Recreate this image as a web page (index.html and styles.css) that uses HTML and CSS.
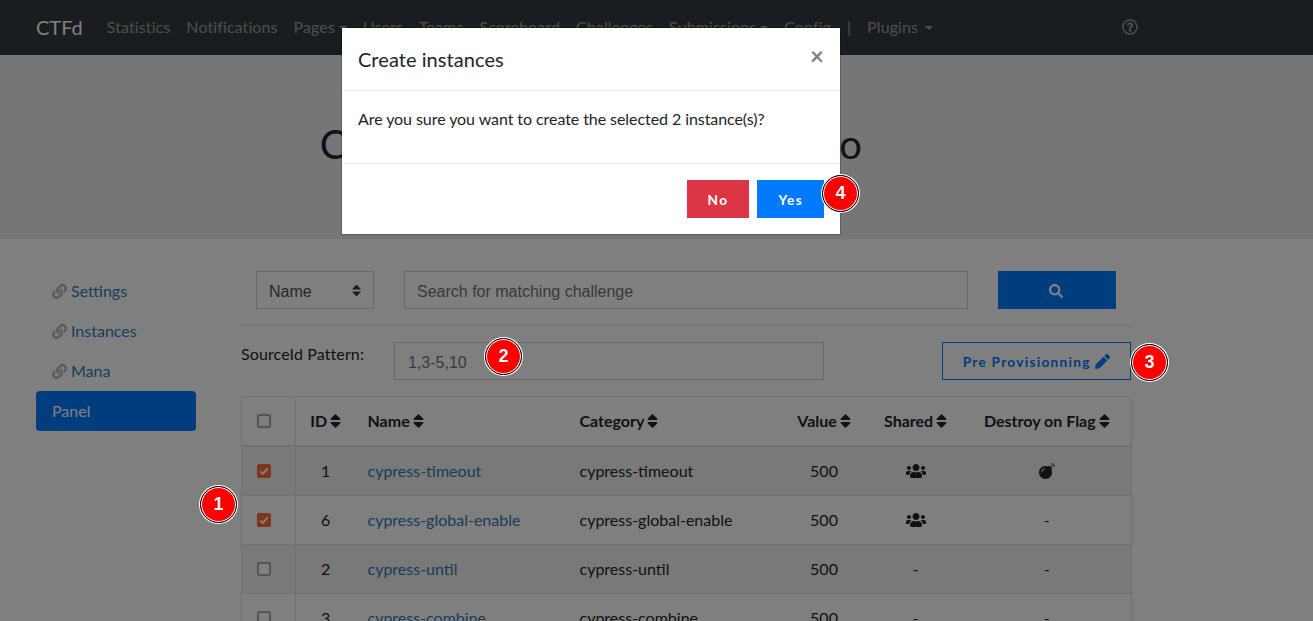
FILE: index.html
```html
<!DOCTYPE html>
<html lang="en">
<head>
    <meta charset="UTF-8">
    <meta name="viewport" content="width=device-width, initial-scale=1.0">
    <title>CTFd - Instances panel</title>
    <link rel="stylesheet" href="styles.css">
</head>

<body>
    <!-- Icon sprites, reused below with <use> -->
    <svg class="sprites" aria-hidden="true">
        <symbol id="i-sort" viewBox="0 0 320 512"><path d="M41 288h238c21.4 0 32.1 25.9 17 41L177 448c-9.4 9.4-24.6 9.4-33.9 0L24 329c-15.1-15.1-4.4-41 17-41zm255-105L177 64c-9.4-9.4-24.6-9.4-33.9 0L24 183c-15.1 15.1-4.4 41 17 41h238c21.4 0 32.1-25.9 17-41z"/></symbol>
        <symbol id="i-link" viewBox="0 0 512 512"><path d="M326.612 185.391c59.747 59.809 58.927 155.698.36 214.59-.11.12-.24.25-.36.37l-67.2 67.2c-59.27 59.27-155.699 59.262-214.96 0-59.27-59.26-59.27-155.7 0-214.96l37.106-37.106c9.84-9.84 26.786-3.3 27.294 10.606.648 17.722 3.826 35.527 9.69 52.721 1.986 5.822.567 12.262-3.783 16.612l-13.087 13.087c-28.026 28.026-28.905 73.66-1.155 101.96 28.024 28.579 74.086 28.749 102.325.51l67.2-67.19c28.191-28.191 28.073-73.757 0-101.83-3.701-3.694-7.429-6.564-10.341-8.569a16.037 16.037 0 0 1-6.947-12.606c-.396-10.567 3.348-21.456 11.698-29.806l21.054-21.055c5.521-5.521 14.182-6.199 20.584-1.731a152.482 152.482 0 0 1 20.522 17.197zM467.547 44.449c-59.261-59.262-155.69-59.27-214.96 0l-67.2 67.2c-.12.12-.25.25-.36.37-58.566 58.892-59.387 154.781.36 214.59a152.454 152.454 0 0 0 20.521 17.196c6.402 4.468 15.064 3.789 20.584-1.731l21.054-21.055c8.35-8.35 12.094-19.239 11.698-29.806a16.037 16.037 0 0 0-6.947-12.606c-2.912-2.005-6.64-4.875-10.341-8.569-28.073-28.073-28.191-73.639 0-101.83l67.2-67.19c28.239-28.239 74.3-28.069 102.325.51 27.75 28.3 26.872 73.934-1.155 101.96l-13.087 13.087c-4.35 4.35-5.769 10.79-3.783 16.612 5.864 17.194 9.042 34.999 9.69 52.721.509 13.906 17.454 20.446 27.294 10.606l37.106-37.106c59.271-59.259 59.271-155.699.001-214.959z"/></symbol>
        <symbol id="i-users" viewBox="0 0 640 512"><path d="M96 224c35.3 0 64-28.7 64-64s-28.7-64-64-64-64 28.7-64 64 28.7 64 64 64zm448 0c35.3 0 64-28.7 64-64s-28.7-64-64-64-64 28.7-64 64 28.7 64 64 64zm32 32h-64c-17.6 0-33.5 7.1-45.1 18.6 40.3 22.1 68.9 62 75.1 109.4h66c17.7 0 32-14.3 32-32v-32c0-35.3-28.7-64-64-64zm-256 0c61.9 0 112-50.1 112-112S381.9 32 320 32 208 82.1 208 144s50.1 112 112 112zm76.8 32h-8.3c-20.8 10-43.9 16-68.5 16s-47.6-6-68.5-16h-8.3C179.6 288 128 339.6 128 403.2V432c0 26.5 21.5 48 48 48h288c26.5 0 48-21.5 48-48v-28.8c0-63.6-51.6-115.2-115.2-115.2zm-223.7-13.4C161.5 263.1 145.6 256 128 256H64c-35.3 0-64 28.7-64 64v32c0 17.7 14.3 32 32 32h65.9c6.3-47.4 34.9-87.3 75.2-109.4z"/></symbol>
        <symbol id="i-bomb" viewBox="0 0 512 512"><path d="M440.5 88.5l-52 52L415 167c9.4 9.4 9.4 24.6 0 33.9l-17.4 17.4c11.8 26.1 18.4 55.1 18.4 85.6 0 114.9-93.1 208-208 208S0 418.9 0 304 93.1 96 208 96c30.5 0 59.5 6.6 85.6 18.4L311 97c9.4-9.4 24.6-9.4 33.9 0l26.5 26.5 52-52 17.1 17zM500 60h-24c-6.6 0-12 5.4-12 12s5.4 12 12 12h24c6.6 0 12-5.4 12-12s-5.4-12-12-12zM440 0c-6.6 0-12 5.4-12 12v24c0 6.6 5.4 12 12 12s12-5.4 12-12V12c0-6.6-5.4-12-12-12zm33.9 55l17-17c4.7-4.7 4.7-12.3 0-17-4.7-4.7-12.3-4.7-17 0l-17 17c-4.7 4.7-4.7 12.3 0 17 4.8 4.7 12.4 4.7 17 0zm-67.8 0c4.7 4.7 12.3 4.7 17 0 4.7-4.7 4.7-12.3 0-17l-17-17c-4.7-4.7-12.3-4.7-17 0-4.7 4.7-4.7 12.3 0 17l17 17zm67.8 34c-4.7-4.7-12.3-4.7-17 0-4.7 4.7-4.7 12.3 0 17l17 17c4.7 4.7 12.3 4.7 17 0 4.7-4.7 4.7-12.3 0-17l-17-17zM112 272c0-35.3 28.7-64 64-64 8.8 0 16-7.2 16-16s-7.2-16-16-16c-52.9 0-96 43.1-96 96 0 8.8 7.2 16 16 16s16-7.2 16-16z"/></symbol>
    </svg>

    <nav class="navbar">
        <div class="navbar-inner">
            <a class="brand" href="#">CTFd</a>
            <a class="nav-link" href="#">Statistics</a>
            <a class="nav-link" href="#">Notifications</a>
            <a class="nav-link caret" href="#">Pages</a>
            <a class="nav-link" href="#">Users</a>
            <a class="nav-link" href="#">Teams</a>
            <a class="nav-link" href="#">Scoreboard</a>
            <a class="nav-link" href="#">Challenges</a>
            <a class="nav-link caret" href="#">Submissions</a>
            <a class="nav-link" href="#">Config</a>
            <span class="nav-link">|</span>
            <a class="nav-link caret caret-wide" href="#">Plugins</a>
            <a class="nav-link nav-help" href="#" aria-label="Help">
                <svg class="icon-help" viewBox="0 0 512 512"><path d="M256 8C119.043 8 8 119.083 8 256c0 136.997 111.043 248 248 248s248-111.003 248-248C504 119.083 392.957 8 256 8zm0 448c-110.532 0-200-89.431-200-200 0-110.495 89.472-200 200-200 110.491 0 200 89.471 200 200 0 110.53-89.431 200-200 200zm107.244-255.2c0 67.052-72.421 68.084-72.421 92.863V300c0 6.627-5.373 12-12 12h-45.647c-6.627 0-12-5.373-12-12v-8.659c0-35.745 27.1-50.034 47.579-61.516 17.561-9.845 28.324-16.541 28.324-29.579 0-17.246-21.999-28.693-39.784-28.693-23.189 0-33.894 10.977-48.942 29.969-4.057 5.12-11.46 6.071-16.666 2.124l-27.824-21.098c-5.107-3.872-6.251-11.066-2.644-16.363C184.846 131.491 214.94 112 261.794 112c49.071 0 101.45 38.304 101.45 88.8zM298 368c0 23.159-18.841 42-42 42s-42-18.841-42-42 18.841-42 42-42 42 18.841 42 42z"/></svg>
            </a>
        </div>
    </nav>

    <header class="jumbotron">
        <h1>Chall-Manager's Instances Info</h1>
    </header>

    <div class="page">
        <aside class="sidebar">
            <a class="side-link" href="#"><svg class="icon-link"><use href="#i-link"/></svg>Settings</a>
            <a class="side-link" href="#"><svg class="icon-link"><use href="#i-link"/></svg>Instances</a>
            <a class="side-link" href="#"><svg class="icon-link"><use href="#i-link"/></svg>Mana</a>
            <a class="side-link active" href="#">Panel</a>
        </aside>

        <main class="content">
            <form class="search-row">
                <select class="field search-field">
                    <option>Name</option>
                </select>
                <input class="field search-input" type="text" placeholder="Search for matching challenge">
                <button class="search-btn" type="button" aria-label="Search">
                    <svg class="icon-search" viewBox="0 0 512 512"><path d="M505 442.7L405.3 343c-4.5-4.5-10.6-7-17-7H372c27.6-35.3 44-79.7 44-128C416 93.1 322.9 0 208 0S0 93.1 0 208s93.1 208 208 208c48.3 0 92.7-16.4 128-44v16.3c0 6.4 2.5 12.5 7 17l99.7 99.7c9.4 9.4 24.6 9.4 33.9 0l28.3-28.3c9.4-9.4 9.4-24.6.1-34zM208 336c-70.7 0-128-57.2-128-128 0-70.7 57.2-128 128-128 70.7 0 128 57.2 128 128 0 70.7-57.2 128-128 128z"/></svg>
                </button>
            </form>

            <hr class="divider">

            <div class="source-row">
                <label class="source-label" for="sourceId">SourceId Pattern:</label>
                <input class="field source-input" id="sourceId" type="text" placeholder="1,3-5,10">
                <button class="outline-btn" type="button">Pre Provisionning
                    <svg class="icon-pencil" viewBox="0 0 512 512"><path d="M497.9 142.1l-46.1 46.1c-4.7 4.7-12.3 4.7-17 0l-111-111c-4.7-4.7-4.7-12.3 0-17l46.1-46.1c18.7-18.7 49.1-18.7 67.9 0l60.1 60.1c18.8 18.7 18.8 49.1 0 67.9zM284.2 99.8L21.6 362.4.4 483.9c-2.9 16.4 11.4 30.6 27.8 27.8l121.5-21.3 262.6-262.6c4.7-4.7 4.7-12.3 0-17l-111-111c-4.8-4.7-12.4-4.7-17.1 0z"/></svg>
                </button>
            </div>

            <table class="challenges">
                <colgroup>
                    <col class="col-check">
                    <col class="col-id">
                    <col class="col-name">
                    <col class="col-category">
                    <col class="col-value">
                    <col class="col-shared">
                    <col class="col-destroy">
                </colgroup>
                <thead>
                    <tr>
                        <th class="cell-check"><span class="check"></span></th>
                        <th class="center">ID <svg class="icon-sort"><use href="#i-sort"/></svg></th>
                        <th>Name <svg class="icon-sort"><use href="#i-sort"/></svg></th>
                        <th>Category <svg class="icon-sort"><use href="#i-sort"/></svg></th>
                        <th class="center">Value <svg class="icon-sort"><use href="#i-sort"/></svg></th>
                        <th class="center">Shared <svg class="icon-sort"><use href="#i-sort"/></svg></th>
                        <th class="center">Destroy on Flag <svg class="icon-sort"><use href="#i-sort"/></svg></th>
                    </tr>
                </thead>
                <tbody>
                    <tr>
                        <td class="cell-check"><span class="check checked"><svg viewBox="0 0 14 14"><path d="M3.2 7.4l2.6 2.5 5-5.6"/></svg></span></td>
                        <td class="center">1</td>
                        <td><a href="#">cypress-timeout</a></td>
                        <td>cypress-timeout</td>
                        <td class="center">500</td>
                        <td class="center"><svg class="icon-users"><use href="#i-users"/></svg></td>
                        <td class="center"><svg class="icon-bomb"><use href="#i-bomb"/></svg></td>
                    </tr>
                    <tr>
                        <td class="cell-check"><span class="check checked"><svg viewBox="0 0 14 14"><path d="M3.2 7.4l2.6 2.5 5-5.6"/></svg></span></td>
                        <td class="center">6</td>
                        <td><a href="#">cypress-global-enable</a></td>
                        <td>cypress-global-enable</td>
                        <td class="center">500</td>
                        <td class="center"><svg class="icon-users"><use href="#i-users"/></svg></td>
                        <td class="center">-</td>
                    </tr>
                    <tr>
                        <td class="cell-check"><span class="check"></span></td>
                        <td class="center">2</td>
                        <td><a href="#">cypress-until</a></td>
                        <td>cypress-until</td>
                        <td class="center">500</td>
                        <td class="center">-</td>
                        <td class="center">-</td>
                    </tr>
                    <tr>
                        <td class="cell-check"><span class="check"></span></td>
                        <td class="center">3</td>
                        <td><a href="#">cypress-combine</a></td>
                        <td>cypress-combine</td>
                        <td class="center">500</td>
                        <td class="center">-</td>
                        <td class="center">-</td>
                    </tr>
                </tbody>
            </table>
        </main>
    </div>

    <div class="backdrop"></div>

    <div class="modal-wrap">
        <div class="modal" role="dialog">
            <div class="modal-header">
                <h5>Create instances</h5>
                <button class="close" type="button" aria-label="Close">&times;</button>
            </div>
            <div class="modal-body">
                <p>Are you sure you want to create the selected 2 instance(s)?</p>
            </div>
            <div class="modal-footer">
                <button class="modal-btn btn-no" type="button">No</button>
                <button class="modal-btn btn-yes" type="button">Yes</button>
            </div>
        </div>
    </div>

    <!-- Numbered callouts drawn over the screenshot -->
    <span class="marker marker-1">1</span>
    <span class="marker marker-2">2</span>
    <span class="marker marker-3">3</span>
    <span class="marker marker-4">4</span>
</body>
</html>
```

FILE: styles.css
```css
* {
    box-sizing: border-box;
}

html, body {
    height: 100%;
}

body {
    margin: 0;
    overflow: hidden; /* modal open, page does not scroll */
    font-family: "Lato", sans-serif;
    font-size: 16px;
    line-height: 24px;
    color: #212529;
    background-color: #fff;
}

a {
    color: #337ab7;
    text-decoration: none;
}

.sprites {
    display: none;
}

/* Navbar */
.navbar {
    height: 55px;
    background-color: #343a40;
}
.navbar-inner {
    width: 1182px;
    height: 55px;
    padding: 0 36px;
    display: flex;
    align-items: center;
}
.brand {
    margin: -2px 16px 0 0;
    font-size: 20px;
    line-height: 30px;
    color: #fff;
}
.nav-link {
    margin-top: -2px;
    padding: 8px;
    letter-spacing: .1px;
    color: rgba(255, 255, 255, .5);
}
.caret::after {
    content: "";
    display: inline-block;
    margin-left: 4px;
    vertical-align: 3px;
    border-top: 4.5px solid;
    border-right: 4px solid transparent;
    border-left: 4px solid transparent;
}
.caret-wide::after {
    margin-left: 7px;
}
.nav-help {
    margin-left: auto;
    display: flex;
}
.icon-help {
    width: 16px;
    height: 16px;
    fill: currentColor;
}

/* Jumbotron */
.jumbotron {
    width: 100%;
    height: 184px;
    padding-top: 65px;
    background-color: #e9ecef;
}
.jumbotron h1 {
    width: 1182px;
    margin: 0;
    font-size: 40px;
    font-weight: 400;
    line-height: 48px;
    letter-spacing: .2px;
    text-align: center;
}

/* Page layout */
.page {
    width: 1182px;
    padding: 32px 51px 0 36px;
    display: flex;
}
.sidebar {
    width: 160px;
    flex: none;
    display: flex;
    flex-direction: column;
}
.side-link {
    height: 40px;
    padding: 8px 16px;
    border-radius: 4px;
    display: flex;
    align-items: center;
}
.side-link.active {
    color: #fff;
    background-color: #007bff;
}
.icon-link {
    width: 15px;
    height: 15px;
    margin-right: 4px;
    fill: #adb5bd;
}
.content {
    flex: 1;
    margin-left: 45px;
    min-width: 0;
}

/* Form controls */
.field {
    height: 38px;
    padding: 8px 12px 4px;
    border: 1px solid #ced4da;
    border-radius: 0;
    font-family: "Liberation Sans", Arial, sans-serif;
    font-size: 16px;
    color: #495057;
    background-color: #fff;
}
.field::placeholder {
    color: #6c757d;
}
.search-row {
    padding: 0 15px;
    display: flex;
    gap: 30px;
}
.search-field {
    width: 118px;
    padding: 7px 12px 5px;
    appearance: none;
    background-image: url("data:image/svg+xml,%3Csvg xmlns='http://www.w3.org/2000/svg' viewBox='0 0 320 512'%3E%3Cpath fill='%23343a40' d='M41 288h238c21.4 0 32.1 25.9 17 41L177 448c-9.4 9.4-24.6 9.4-33.9 0L24 329c-15.1-15.1-4.4-41 17-41zm255-105L177 64c-9.4-9.4-24.6-9.4-33.9 0L24 183c-15.1 15.1-4.4 41 17 41h238c21.4 0 32.1-25.9 17-41z'/%3E%3C/svg%3E");
    background-repeat: no-repeat;
    background-position: right 12px center;
    background-size: 9px 15px;
}
.search-input {
    flex: 1;
    min-width: 0;
}
.search-btn {
    width: 118px;
    height: 38px;
    flex: none;
    border: 0;
    background-color: #007bff;
    display: flex;
    align-items: center;
    justify-content: center;
}
.icon-search {
    width: 14px;
    height: 14px;
    margin: 1px 2px 0 0;
    fill: #fff;
}
.divider {
    margin: 16px 0;
    border: 0;
    border-top: 1px solid rgba(0, 0, 0, .1);
}
.source-row {
    display: flex;
    align-items: flex-start;
}
.source-label {
    width: 153px;
    flex: none;
    letter-spacing: .12px;
}
.source-input {
    width: 430px;
    padding-left: 13px;
}
.outline-btn {
    width: 189px;
    height: 38px;
    margin-left: auto;
    padding: 2px 6px 0;
    border: 1px solid #007bff;
    background: transparent;
    color: #007bff;
    font-family: "Lato", sans-serif;
    font-size: 13.6px;
    font-weight: 700;
    letter-spacing: 1.3px;
}
.icon-pencil {
    width: 15px;
    height: 15px;
    fill: currentColor;
    vertical-align: -2px;
}

/* Table */
.challenges {
    width: 890px;
    margin-top: 16px;
    table-layout: fixed;
    border-collapse: collapse;
    border: 1px solid #dee2e6;
}
.col-check { width: 54px; }
.col-id { width: 60px; }
.col-name { width: 212px; }
.col-category { width: 212px; }
.col-value { width: 89px; }
.col-shared { width: 94px; }
.col-destroy { width: 169px; }

.challenges th,
.challenges td {
    padding: 12px;
    text-align: left;
    border-top: 1px solid #dee2e6;
    white-space: nowrap;
}
.challenges th {
    padding: 12px 0 12px 12px;
    font-weight: 700;
    border-bottom: 2px solid #dee2e6;
}
.challenges tbody tr:nth-child(odd) {
    background-color: rgba(0, 0, 0, .05);
}
.challenges .center {
    padding-left: 0;
    padding-right: 0;
    text-align: center;
}
.challenges .cell-check {
    padding: 12px 0 12px 15px;
    border-right: 1px solid #dee2e6;
}
.check {
    width: 14px;
    height: 14px;
    border: 2px solid #aaaab2;
    border-radius: 2px;
    display: inline-block;
    vertical-align: -1px;
    background-color: #fff;
}
.check.checked {
    border: 0;
    background-color: #ff6a32;
}
.check svg {
    display: block;
    width: 14px;
    height: 14px;
    fill: none;
    stroke: #fff;
    stroke-width: 2;
}
.icon-sort {
    width: 11px;
    height: 18px;
    margin-left: -1px;
    vertical-align: -3px;
    fill: currentColor;
}
.icon-users {
    width: 20px;
    height: 16px;
    vertical-align: -2px;
    fill: #212529;
}
.icon-bomb {
    width: 16px;
    height: 16px;
    vertical-align: -2px;
    fill: #212529;
}

/* Modal */
.backdrop {
    position: fixed;
    inset: 0;
    background-color: #000;
    opacity: .5;
}
.modal-wrap {
    position: fixed;
    top: 27px;
    left: 0;
    width: 1182px;
    display: flex;
    justify-content: center;
}
.modal {
    width: 500px;
    background-color: #fff;
    border: 1px solid rgba(0, 0, 0, .2);
    background-clip: padding-box;
}
.modal-header {
    height: 63px;
    padding: 16px;
    border-bottom: 1px solid #e9ecef;
    display: flex;
    justify-content: space-between;
}
.modal-header h5 {
    margin: 0;
    font-size: 20px;
    font-weight: 400;
    line-height: 30px;
    letter-spacing: .06px;
}
.close {
    padding: 0;
    border: 0;
    background: transparent;
    font-family: "Lato", sans-serif;
    font-size: 24px;
    font-weight: 700;
    line-height: 24px;
    color: #000;
    opacity: .5;
    height: 24px;
}
.modal-body {
    height: 73px;
    padding: 16px;
    border-bottom: 1px solid #e9ecef;
}
.modal-body p {
    margin: 0;
    letter-spacing: -.07px;
}
.modal-footer {
    height: 70px;
    padding: 16px;
    display: flex;
    justify-content: flex-end;
    gap: 8px;
}
.modal-btn {
    height: 38px;
    padding: 2px 21px 0;
    border: 0;
    color: #fff;
    font-family: "Lato", sans-serif;
    font-size: 13.6px;
    font-weight: 700;
    letter-spacing: 1.36px;
}
.btn-no {
    background-color: #dc3545;
}
.btn-yes {
    background-color: #007bff;
}

/* Callouts */
.marker {
    position: absolute;
    width: 37px;
    height: 37px;
    border: 1px solid #000;
    border-radius: 50%;
    box-shadow: 0 0 0 1px #fff, inset 0 0 0 1px #fff;
    background-color: #f00;
    color: #fff;
    font-family: "Liberation Sans", Arial, sans-serif;
    font-size: 18px;
    font-weight: 700;
    line-height: 35px;
    text-align: center;
}
.marker-1 { left: 200px; top: 486px; }
.marker-2 { left: 485px; top: 338px; }
.marker-3 { left: 1131px; top: 344px; }
.marker-4 { left: 822px; top: 175px; }
```
